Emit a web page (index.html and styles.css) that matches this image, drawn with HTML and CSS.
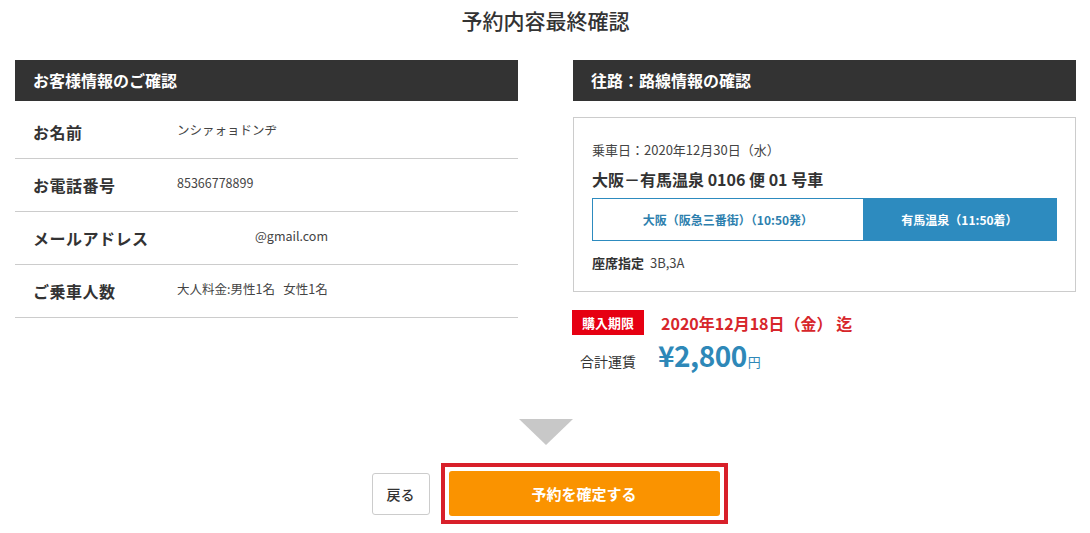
FILE: index.html
```html
<!DOCTYPE html>
<html lang="ja">
<head>
    <meta charset="UTF-8">
    <meta name="viewport" content="width=device-width, initial-scale=1.0">
    <title>予約内容最終確認</title>
    <link rel="stylesheet" href="styles.css">
</head>
<body>
    <div class="page">
        <h1>予約内容最終確認</h1>
        <div class="columns">
            <section class="panel">
                <h2 class="panel-head">お客様情報のご確認</h2>
                <div class="info-list">
                    <div class="info-row">
                        <div class="info-label">お名前</div>
                        <div class="info-value">ンシァォョドンヂ</div>
                    </div>
                    <div class="info-row">
                        <div class="info-label">お電話番号</div>
                        <div class="info-value">85366778899</div>
                    </div>
                    <div class="info-row">
                        <div class="info-label">メールアドレス</div>
                        <div class="info-value email">@gmail.com</div>
                    </div>
                    <div class="info-row">
                        <div class="info-label">ご乗車人数</div>
                        <div class="info-value">大人料金:男性1名&nbsp;&nbsp;&nbsp;女性1名</div>
                    </div>
                </div>
            </section>
            <section class="panel">
                <h2 class="panel-head">往路：路線情報の確認</h2>
                <div class="route-card">
                    <p class="ride-date">乗車日：2020年12月30日（水）</p>
                    <p class="route-name">大阪－有馬温泉 0106 便 01 号車</p>
                    <div class="segment">
                        <div class="seg-from">大阪（阪急三番街）（10:50発）</div>
                        <div class="seg-to">有馬温泉（11:50着）</div>
                    </div>
                    <p class="seat"><span class="seat-label">座席指定</span>3B,3A</p>
                </div>
                <div class="deadline">
                    <span class="badge">購入期限</span>
                    <span class="deadline-date">2020年12月18日（金） 迄</span>
                </div>
                <div class="total">
                    <span class="total-label">合計運賃</span>
                    <span class="total-price">¥2,800<small>円</small></span>
                </div>
            </section>
        </div>
        <div class="arrow"></div>
        <div class="actions">
            <button type="button" class="btn-back">戻る</button>
            <div class="highlight">
                <button type="button" class="btn-confirm">予約を確定する</button>
            </div>
        </div>
    </div>
</body>
</html>
```

FILE: styles.css
```css
body {
    font-family: "Noto Sans CJK JP", "Noto Sans", sans-serif;
    background-color: #fff;
    color: #333;
    margin: 0;
}
.page {
    width: 1061px;
    margin: 0 auto;
    padding-left: 1px;
}
h1 {
    margin: 0;
    font-size: 21px;
    font-weight: 500;
    line-height: 40px;
    text-align: center;
    color: #333;
}
.columns {
    display: flex;
    gap: 55px;
    margin-top: 20px;
}
.panel {
    width: 503px;
}
.panel-head {
    margin: 0;
    height: 41px;
    line-height: 41px;
    padding-left: 18px;
    background-color: #333;
    color: #fff;
    font-size: 16px;
    font-weight: 700;
}
.info-list {
    padding-top: 5px;
}
.info-row {
    display: flex;
    align-items: center;
    height: 52px;
    border-bottom: 1px solid #ccc;
}
.info-label {
    width: 144px;
    padding-left: 18px;
    font-size: 16px;
    font-weight: 700;
    letter-spacing: 0.5px;
}
.info-value {
    font-size: 12.5px;
    color: #444;
    padding-bottom: 6px;
}
.info-value.email {
    padding-left: 78px;
}
.route-card {
    margin-top: 16px;
    border: 1px solid #ccc;
    padding: 22px 18px 18px;
}
.route-card p {
    margin: 0;
}
.ride-date {
    font-size: 13px;
    line-height: 20px;
    color: #444;
}
.route-name {
    font-size: 16px;
    font-weight: 700;
    line-height: 24px;
    margin-top: 7px !important;
}
.segment {
    display: flex;
    height: 41px;
    margin-top: 7px;
    border: 1px solid #2d8bbf;
    font-size: 12px;
    font-weight: 700;
}
.seg-from {
    width: 58.3%;
    display: flex;
    align-items: center;
    justify-content: center;
    color: #2d7fae;
}
.seg-to {
    flex: 1;
    display: flex;
    align-items: center;
    justify-content: center;
    background-color: #2d8bbf;
    color: #fff;
}
.seat {
    font-size: 13px;
    line-height: 20px;
    margin-top: 12px !important;
    color: #444;
}
.seat-label {
    display: inline-block;
    width: 58px;
    font-weight: 700;
    color: #333;
}
.deadline {
    display: flex;
    align-items: center;
    gap: 17px;
    margin-top: 18px;
    margin-left: -1px;
}
.badge {
    height: 25px;
    line-height: 25px;
    padding: 0 10px;
    background-color: #e60012;
    color: #fff;
    font-size: 13px;
    font-weight: 700;
}
.deadline-date {
    color: #d7262b;
    font-size: 16px;
    font-weight: 700;
}
.total {
    display: flex;
    align-items: baseline;
    gap: 22px;
    margin-top: 0;
    padding-left: 7px;
    height: 46px;
}
.total-label {
    font-size: 14px;
}
.total-price {
    color: #2e88b8;
    font-size: 28px;
    font-weight: 700;
    letter-spacing: -0.5px;
}
.total-price small {
    font-size: 13px;
    font-weight: 400;
    margin-left: 1px;
}
.arrow {
    width: 0;
    height: 0;
    margin: 38px auto 0;
    border-left: 27px solid transparent;
    border-right: 27px solid transparent;
    border-top: 26px solid #c8c8c8;
}
.actions {
    display: flex;
    justify-content: center;
    align-items: center;
    gap: 11px;
    margin-top: 18px;
    padding-left: 8px;
}
.btn-back {
    width: 58px;
    height: 42px;
    background-color: #fff;
    border: 1px solid #ccc;
    border-radius: 3px;
    font-family: inherit;
    font-size: 14px;
    font-weight: 500;
    color: #333;
    cursor: pointer;
}
.highlight {
    border: 4px solid #d8202a;
    padding: 4px;
}
.btn-confirm {
    display: block;
    width: 271px;
    height: 45px;
    background-color: #fa9300;
    border: none;
    border-radius: 3px;
    font-family: inherit;
    font-size: 15px;
    font-weight: 700;
    color: #fff;
    cursor: pointer;
}
```
